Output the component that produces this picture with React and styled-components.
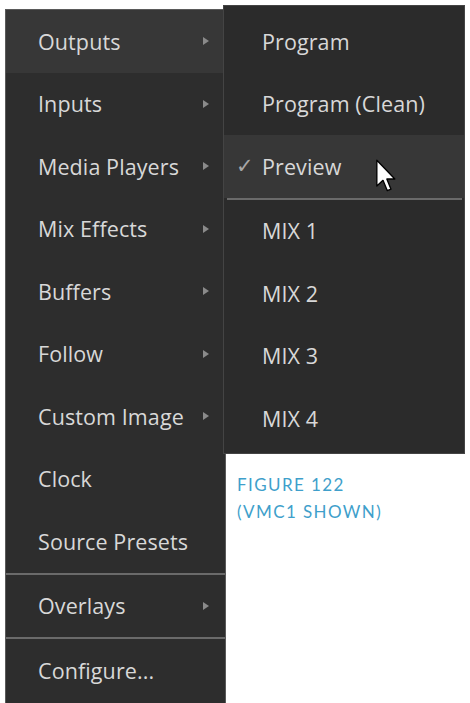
import React from "react";
import styled, { createGlobalStyle } from "styled-components";

const Global = createGlobalStyle`
  html, body { margin: 0; padding: 0; background: #ffffff; }
  body { width: 470px; height: 703px; overflow: hidden; }
`;

const Page = styled.div`
  position: relative;
  width: 470px;
  height: 703px;
  padding: 9px 0 0 5px;
  box-sizing: border-box;
  font-family: "Open Sans", "DejaVu Sans", sans-serif;
`;

const MainMenu = styled.div`
  width: 221px;
  box-sizing: border-box;
  background: #2d2d2d;
  border: 1px solid #5a5a5a;
  border-bottom: none;
  display: flex;
  flex-direction: column;
  padding-bottom: 10px;
`;

const Row = styled.div`
  height: 62.5px;
  display: flex;
  align-items: center;
  padding-left: ${(p) => p.$indent}px;
  padding-right: 16px;
  background: ${(p) => (p.$active ? "#373737" : "transparent")};
  color: #d8d8d8;
  font-size: 21.5px;
  letter-spacing: 0.1px;
  box-sizing: border-box;
  position: relative;
`;

const Label = styled.span`
  flex: 1;
  white-space: nowrap;
`;

const Arrow = styled.span`
  width: 0;
  height: 0;
  border-top: 4px solid transparent;
  border-bottom: 4px solid transparent;
  border-left: 6px solid #8a8a8a;
`;

const Check = styled.span`
  position: absolute;
  left: 12px;
  color: #a8a8a8;
  font-family: "DejaVu Sans", sans-serif;
  font-size: 21px;
`;

const Separator = styled.div`
  height: 2px;
  background: #6a6a6a;
  margin: ${(p) => (p.$inset ? "0 2px 0 3px" : "0")};
`;

const Flyout = styled.div`
  position: absolute;
  left: 223px;
  top: 5px;
  width: 242px;
  box-sizing: border-box;
  background: #2b2b2b;
  border: 1px solid #444;
  padding: 4px 0 3px 0;
  display: flex;
  flex-direction: column;
`;

const Caption = styled.div`
  position: absolute;
  left: 237px;
  top: 471px;
  color: #3f9fcb;
  font-family: "Lato", "Open Sans", sans-serif;
  font-size: 17px;
  line-height: 27px;
  letter-spacing: 1.4px;
`;

const Cursor = styled.svg`
  position: absolute;
  left: 376px;
  top: 159px;
`;

const mainItems = [
  { label: "Outputs", sub: true, active: true },
  { label: "Inputs", sub: true },
  { label: "Media Players", sub: true },
  { label: "Mix Effects", sub: true },
  { label: "Buffers", sub: true },
  { label: "Follow", sub: true },
  { label: "Custom Image", sub: true },
  { label: "Clock" },
  { label: "Source Presets" },
];

export default function App() {
  return (
    <>
      <Global />
      <Page>
        <MainMenu>
          {mainItems.map((it) => (
            <Row key={it.label} $indent={32} $active={it.active}>
              <Label>{it.label}</Label>
              {it.sub && <Arrow />}
            </Row>
          ))}
          <Separator />
          <Row $indent={32}>
            <Label>Overlays</Label>
            <Arrow />
          </Row>
          <Separator />
          <Row $indent={32}>
            <Label>Configure...</Label>
          </Row>
        </MainMenu>
        <Flyout>
          <Row $indent={38}>
            <Label>Program</Label>
          </Row>
          <Row $indent={38}>
            <Label>Program (Clean)</Label>
          </Row>
          <Row $indent={38} $active>
            <Check>✓</Check>
            <Label>Preview</Label>
          </Row>
          <Separator $inset />
          <Row $indent={38}>
            <Label>MIX 1</Label>
          </Row>
          <Row $indent={38}>
            <Label>MIX 2</Label>
          </Row>
          <Row $indent={38}>
            <Label>MIX 3</Label>
          </Row>
          <Row $indent={38}>
            <Label>MIX 4</Label>
          </Row>
        </Flyout>
        <Caption>
          FIGURE 122
          <br />
          (VMC1 SHOWN)
        </Caption>
        <Cursor width="20" height="34" viewBox="0 0 12 20">
          <path
            d="M0.5 0.5 L0.5 16 L4.2 12.6 L6.8 18.8 L9 17.9 L6.5 11.8 L11.3 11.8 Z"
            fill="#ffffff"
            stroke="#000000"
            strokeWidth="0.8"
            strokeLinejoin="round"
          />
        </Cursor>
      </Page>
    </>
  );
}
